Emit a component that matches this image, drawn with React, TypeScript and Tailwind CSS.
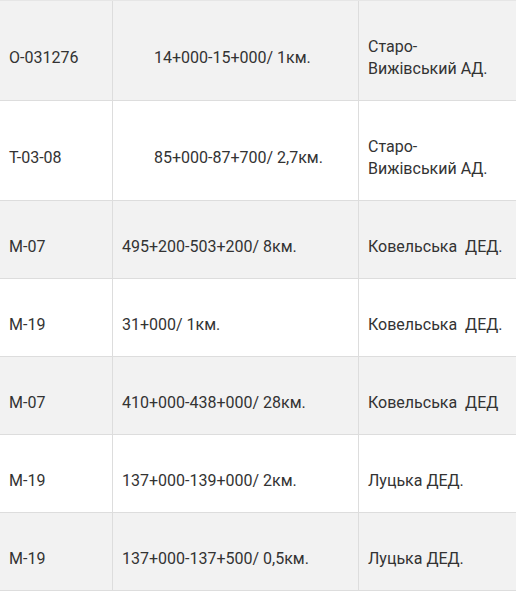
import React from "react";

type Row = {
  code: string;
  range: string;
  org: React.ReactNode;
  indent?: boolean;
  gray: boolean;
};

const rows: Row[] = [
  { code: "О-031276", range: "14+000-15+000/ 1км.", org: (<>Старо-<br />Вижівський АД.</>), indent: true, gray: true },
  { code: "Т-03-08", range: "85+000-87+700/ 2,7км.", org: (<>Старо-<br />Вижівський АД.</>), indent: true, gray: false },
  { code: "М-07", range: "495+200-503+200/ 8км.", org: "Ковельська\u00a0 ДЕД.", gray: true },
  { code: "М-19", range: "31+000/ 1км.", org: "Ковельська\u00a0 ДЕД.", gray: false },
  { code: "М-07", range: "410+000-438+000/ 28км.", org: "Ковельська\u00a0 ДЕД", gray: true },
  { code: "М-19", range: "137+000-139+000/ 2км.", org: "Луцька ДЕД.", gray: false },
  { code: "М-19", range: "137+000-137+500/ 0,5км.", org: "Луцька ДЕД.", gray: true },
];

export default function App() {
  return (
    <div
      className="w-[516px] h-[593px] overflow-hidden bg-white text-[16px] leading-[22px] text-[#333333]"
      style={{ fontFamily: "Roboto, 'Noto Sans', sans-serif" }}
    >
      <div className="flex flex-col border-t border-[#e6e6e6]">
        {rows.map((r, i) => (
          <div
            key={i}
            className={`flex border-b border-[#dddddd] ${r.gray ? "bg-[#f2f2f2]" : "bg-white"}`}
          >
            <div className="w-[113px] shrink-0 flex items-center border-r border-[#dddddd] pl-[9px] pt-[35px] pb-[20px]">
              <div>{r.code}</div>
            </div>
            <div
              className={`w-[246px] shrink-0 flex items-center border-r border-[#dddddd] pt-[35px] pb-[20px] ${r.indent ? "pl-[41px]" : "pl-[9px]"}`}
            >
              <div>{r.range}</div>
            </div>
            <div className="flex-1 flex items-center pl-[9px] pt-[35px] pb-[20px] whitespace-nowrap">
              <div>{r.org}</div>
            </div>
          </div>
        ))}
      </div>
    </div>
  );
}
